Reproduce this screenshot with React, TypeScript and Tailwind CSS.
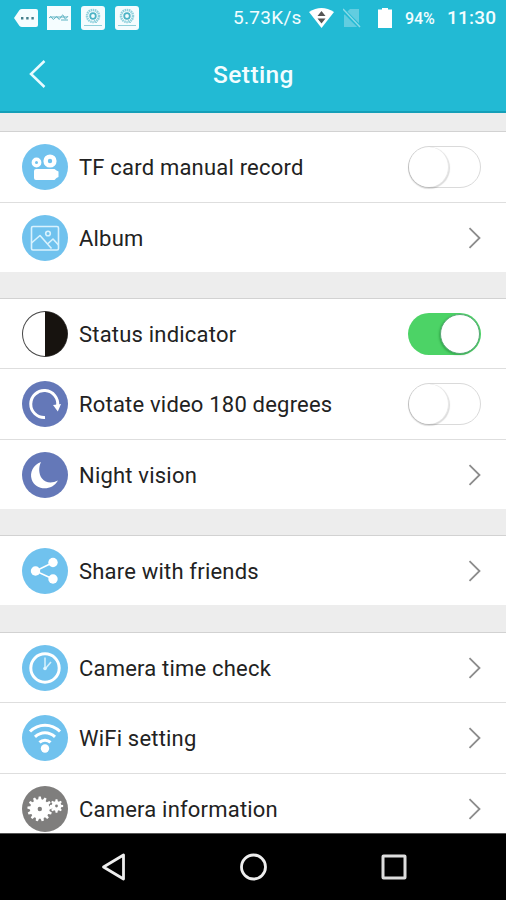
import type { ReactNode } from "react";

const gearPath = (cx: number, cy: number, outer: number, inner: number, teeth: number) => {
  const points: string[] = [];
  for (let i = 0; i < teeth; i++) {
    const step = (Math.PI * 2) / teeth;
    const a = i * step - Math.PI / 2;
    [
      [-0.34, inner],
      [-0.18, outer],
      [0.18, outer],
      [0.34, inner],
    ].forEach(([offset, r]) => {
      const t = a + offset * step;
      points.push(`${(cx + r * Math.cos(t)).toFixed(2)} ${(cy + r * Math.sin(t)).toFixed(2)}`);
    });
  }
  return `M${points.join("L")}Z`;
};

function Badge({ color, children }: { color: string; children: ReactNode }) {
  return (
    <svg viewBox="0 0 46 46" className="w-[46px] h-[46px] shrink-0" fill="none">
      <circle cx="23" cy="23" r="23" fill={color} />
      {children}
    </svg>
  );
}

const BLUE = "#70c2ee";
const INDIGO = "#6478b8";

const icons = {
  record: (
    <Badge color={BLUE}>
      <circle cx="14.5" cy="18.5" r="3.2" stroke="#fff" strokeWidth="3.4" />
      <circle cx="28" cy="17" r="4.4" stroke="#fff" strokeWidth="4.4" />
      <path d="M14 25h18.5l2 1.5 2 1v5.500l-2 1-2 2H14a2 2 0 0 1-2-2v-7a2 2 0 0 1 2-2z" fill="#fff" />
    </Badge>
  ),
  album: (
    <Badge color={BLUE}>
      <g stroke="#d9f2fd" strokeWidth="1.6" strokeLinejoin="round">
        <rect x="9.500" y="11.500" width="27" height="23.500" rx="1.500" />
        <circle cx="26" cy="18.500" r="2.300" />
        <path d="M9.500 28l8.500-7.500L29.500 33.500M25.500 29l5.500-5 5.500 6" />
      </g>
    </Badge>
  ),
  status: (
    <Badge color="#444">
      <circle cx="23" cy="23" r="22" fill="#fff" />
      <path d="M23 .5a22.500 22.500 0 0 1 0 45z" fill="#17130f" />
    </Badge>
  ),
  rotate: (
    <Badge color={INDIGO}>
      <path d="M23 36.500A13.500 13.500 0 1 1 35.600 25" stroke="#fff" strokeWidth="3" />
      <path d="M31 24l8-1-3.200 7.500z" fill="#fff" />
    </Badge>
  ),
  night: (
    <Badge color={INDIGO}>
      <path d="M19 10C11 13 7.500 20.500 9.700 27.500 13 38 29.500 40 36 28.500 30 31.500 23.500 31 20 26.500 16.500 22 16.500 15 19 10z" fill="#fff" />
    </Badge>
  ),
  share: (
    <Badge color={BLUE}>
      <path d="M31 14.500L13.500 23 31 31" stroke="#fff" strokeWidth="1.500" />
      <circle cx="13.500" cy="23" r="4.700" fill="#fff" />
      <circle cx="31" cy="14.500" r="4.700" fill="#fff" />
      <circle cx="31" cy="31" r="4.700" fill="#fff" />
    </Badge>
  ),
  clock: (
    <Badge color={BLUE}>
      <circle cx="23" cy="23" r="14.200" stroke="#fff" strokeWidth="3" />
      <path d="M23 12.500v10.500M23.500 23.500l5.500-6.500" stroke="#d3effc" strokeWidth="1.600" />
      <circle cx="23" cy="23.500" r="1.800" fill="#e0f5fe" />
    </Badge>
  ),
  wifi: (
    <Badge color={BLUE}>
      <g stroke="#fff" strokeWidth="3">
        <path d="M8 16.500c8.500-8.500 21.500-8.500 30 0" />
        <path d="M13 21.800c6-5.500 14-5.500 20 0" />
        <path d="M17.500 27.300c3-2.900 8-2.900 11 0" />
      </g>
      <circle cx="23" cy="33.500" r="4.200" fill="#fff" />
    </Badge>
  ),
  info: (
    <Badge color="#7f7e7d">
      <path d={gearPath(17.8, 23, 12.5, 9.8, 13)} fill="#fff" />
      <circle cx="17.800" cy="23" r="2.200" fill="#7f7e7d" />
      <path d={gearPath(34.5, 20, 6.7, 4.8, 8)} fill="#fff" />
      <circle cx="34.500" cy="20" r="1.400" fill="#7f7e7d" />
    </Badge>
  ),
};

function Toggle({ on = false }: { on?: boolean }) {
  return on ? (
    <span className="flex justify-end w-[73px] h-[42px] rounded-full bg-[#4cd366] p-px">
      <span className="size-10 rounded-full bg-white border border-[#5aa878] shadow-[-1px_1px_2px_rgba(0,80,20,0.3)]" />
    </span>
  ) : (
    <span className="flex w-[73px] h-[42px] rounded-full bg-white border-[1.5px] border-[#dadada]">
      <span className="size-10 rounded-full bg-white border-r border-[#e8e8e8] shadow-[0_1px_1px_1px_rgba(0,0,0,0.14)]" />
    </span>
  );
}

function Chevron() {
  return (
    <svg viewBox="0 0 13 22" className="w-[13px] h-[22px]" fill="none">
      <path d="M1.500 1.200L11.500 11 1.500 20.800" stroke="#8c8c8c" strokeWidth="1.800" />
    </svg>
  );
}

type Item = { icon: keyof typeof icons; label: string; toggle?: boolean };

const groups: { size: string; items: Item[] }[] = [
  {
    size: "h-[141px] mt-[18px]",
    items: [
      { icon: "record", label: "TF card manual record", toggle: false },
      { icon: "album", label: "Album" },
    ],
  },
  {
    size: "h-[211px] mt-[26px]",
    items: [
      { icon: "status", label: "Status indicator", toggle: true },
      { icon: "rotate", label: "Rotate video 180 degrees", toggle: false },
      { icon: "night", label: "Night vision" },
    ],
  },
  {
    size: "h-[70px] mt-[26px]",
    items: [{ icon: "share", label: "Share with friends" }],
  },
  {
    size: "h-[211px] mt-[27px]",
    items: [
      { icon: "clock", label: "Camera time check" },
      { icon: "wifi", label: "WiFi setting" },
      { icon: "info", label: "Camera information" },
    ],
  },
];

function Row({ item }: { item: Item }) {
  return (
    <div className="flex-1 flex items-center bg-white border-t border-[#dedede] first:border-[#d2d2d2] pt-px pl-[21.5px] pr-[25px]">
      {icons[item.icon]}
      <span className="ml-[11.5px] mt-0.5 text-[22px] leading-7 tracking-[0.2px] text-[#222] whitespace-nowrap">
        {item.label}
      </span>
      <span className="ml-auto">
        {item.toggle === undefined ? <Chevron /> : <Toggle on={item.toggle} />}
      </span>
    </div>
  );
}

function CameraBadge() {
  return (
    <svg viewBox="0 0 24 24" className="size-6 mr-[10px]" fill="none">
      <rect width="24" height="24" rx="3" fill="#f4fcfe" />
      <circle cx="12" cy="10" r="6" stroke="#8fd0dc" strokeWidth="2.500" strokeDasharray="1.500 .6" />
      <circle cx="12" cy="10" r="2.800" stroke="#4cb3c5" strokeWidth="1.800" />
      <path d="M13 14l3 3M3 19.500h18" stroke="#8fcfda" />
    </svg>
  );
}

function StatusBar() {
  return (
    <div className="flex items-center h-9 pl-[14px] pr-[10px] text-[#f2fdff]">
      <svg viewBox="0 0 24 20" className="w-6 h-5 mr-[9px]">
        <path d="M0 10L5.500 2Q6.500 1 8 1h14a2 2 0 0 1 2 2v14a2 2 0 0 1-2 2H8q-1.500 0-2.500-1z" fill="#f5fdff" />
        <path d="M7 9h2.400v2.400H7zm5.200 0h2.400v2.400h-2.400zm5.200 0h2.400v2.400h-2.400z" fill="#437e8b" />
      </svg>
      <span className="flex items-center justify-center w-6 h-6 mr-[10px] bg-[#f5fdff] text-[#5fb3c3]">
        <svg viewBox="0 0 20 8" className="w-5 h-2" fill="none" stroke="currentColor">
          <path d="M0 4q2-3 3 0t3 0 3 0 3-1 3 0 4-1M1 3h17M12 6h7" />
        </svg>
      </span>
      <CameraBadge />
      <CameraBadge />
      <span className="ml-auto w-[68px] mt-px text-[19px] tracking-[0.3px] whitespace-nowrap">5.73K/s</span>
      <svg viewBox="0 0 25 20" className="w-[25px] h-5 ml-[8px]">
        <path d="M0 4Q12.500-4 25 4L12.500 20z" fill="#fff" />
        <path d="M8.500 8h8l-4-5zM8.500 10.500h8l-4 5z" fill="#555" />
      </svg>
      <svg viewBox="0 0 18 20" className="w-[18px] h-5 ml-[9px]">
        <path d="M7 1h9v18H1V7z" fill="#62cde0" />
        <path d="M0 2l17 17" stroke="#22bad4" strokeWidth="4" />
        <path d="M0 1l17 18" stroke="#8bdbe7" strokeWidth="1.500" />
      </svg>
      <svg viewBox="0 0 14 20" className="w-[14px] h-5 ml-[17px]">
        <path d="M4 0h6v1.500h4V20H0V1.500h4z" fill="#fff" />
      </svg>
      <span className="w-[31px] ml-[13px] mt-px text-base font-medium tracking-[-0.1px]">94%</span>
      <span className="w-[49px] ml-[11px] mt-px text-[19px] font-medium tracking-[0.2px]">11:30</span>
    </div>
  );
}

export default function App() {
  return (
    <div className="flex flex-col w-full h-[900px] overflow-hidden bg-[#ededed] font-['Roboto',sans-serif]">
      <header className="h-[113px] shrink-0 bg-[#22bad4] border-b-2 border-[#159fb8]">
        <StatusBar />
        <div className="grid grid-cols-[1fr_auto_1fr] items-center h-[76px] pl-[29px]">
          <svg viewBox="0 0 17 28" className="w-[17px] h-7" fill="none">
            <path d="M15.500 1L2 14l13.500 13" stroke="#e9fbff" strokeWidth="2.500" />
          </svg>
          <h1 className="mt-0.5 mr-[28px] text-[24.5px] font-medium tracking-[0.4px] text-[#f2fdff]">Setting</h1>
        </div>
      </header>
      <main className="flex-1 min-h-0">
        {groups.map((group, i) => (
          <section key={i} className={`flex flex-col ${group.size}`}>
            {group.items.map((item) => (
              <Row key={item.icon} item={item} />
            ))}
          </section>
        ))}
      </main>
      <nav className="h-[67px] shrink-0 flex items-center justify-between bg-black pl-[101px] pr-[99px] border-t border-[#555]">
        <svg viewBox="0 0 26 30" className="w-[26px] h-[30px]" fill="none" stroke="#eee" strokeWidth="2.800">
          <path d="M22.500 3v24L2.500 15z" strokeLinejoin="round" />
        </svg>
        <svg viewBox="0 0 30 30" className="size-[30px]" fill="none" stroke="#eee" strokeWidth="2.800">
          <circle cx="14.500" cy="15" r="12" />
        </svg>
        <svg viewBox="0 0 26 26" className="size-[26px]" fill="none" stroke="#ddd" strokeWidth="3">
          <rect x="2" y="2" width="22" height="22" rx=".5" />
        </svg>
      </nav>
    </div>
  );
}
